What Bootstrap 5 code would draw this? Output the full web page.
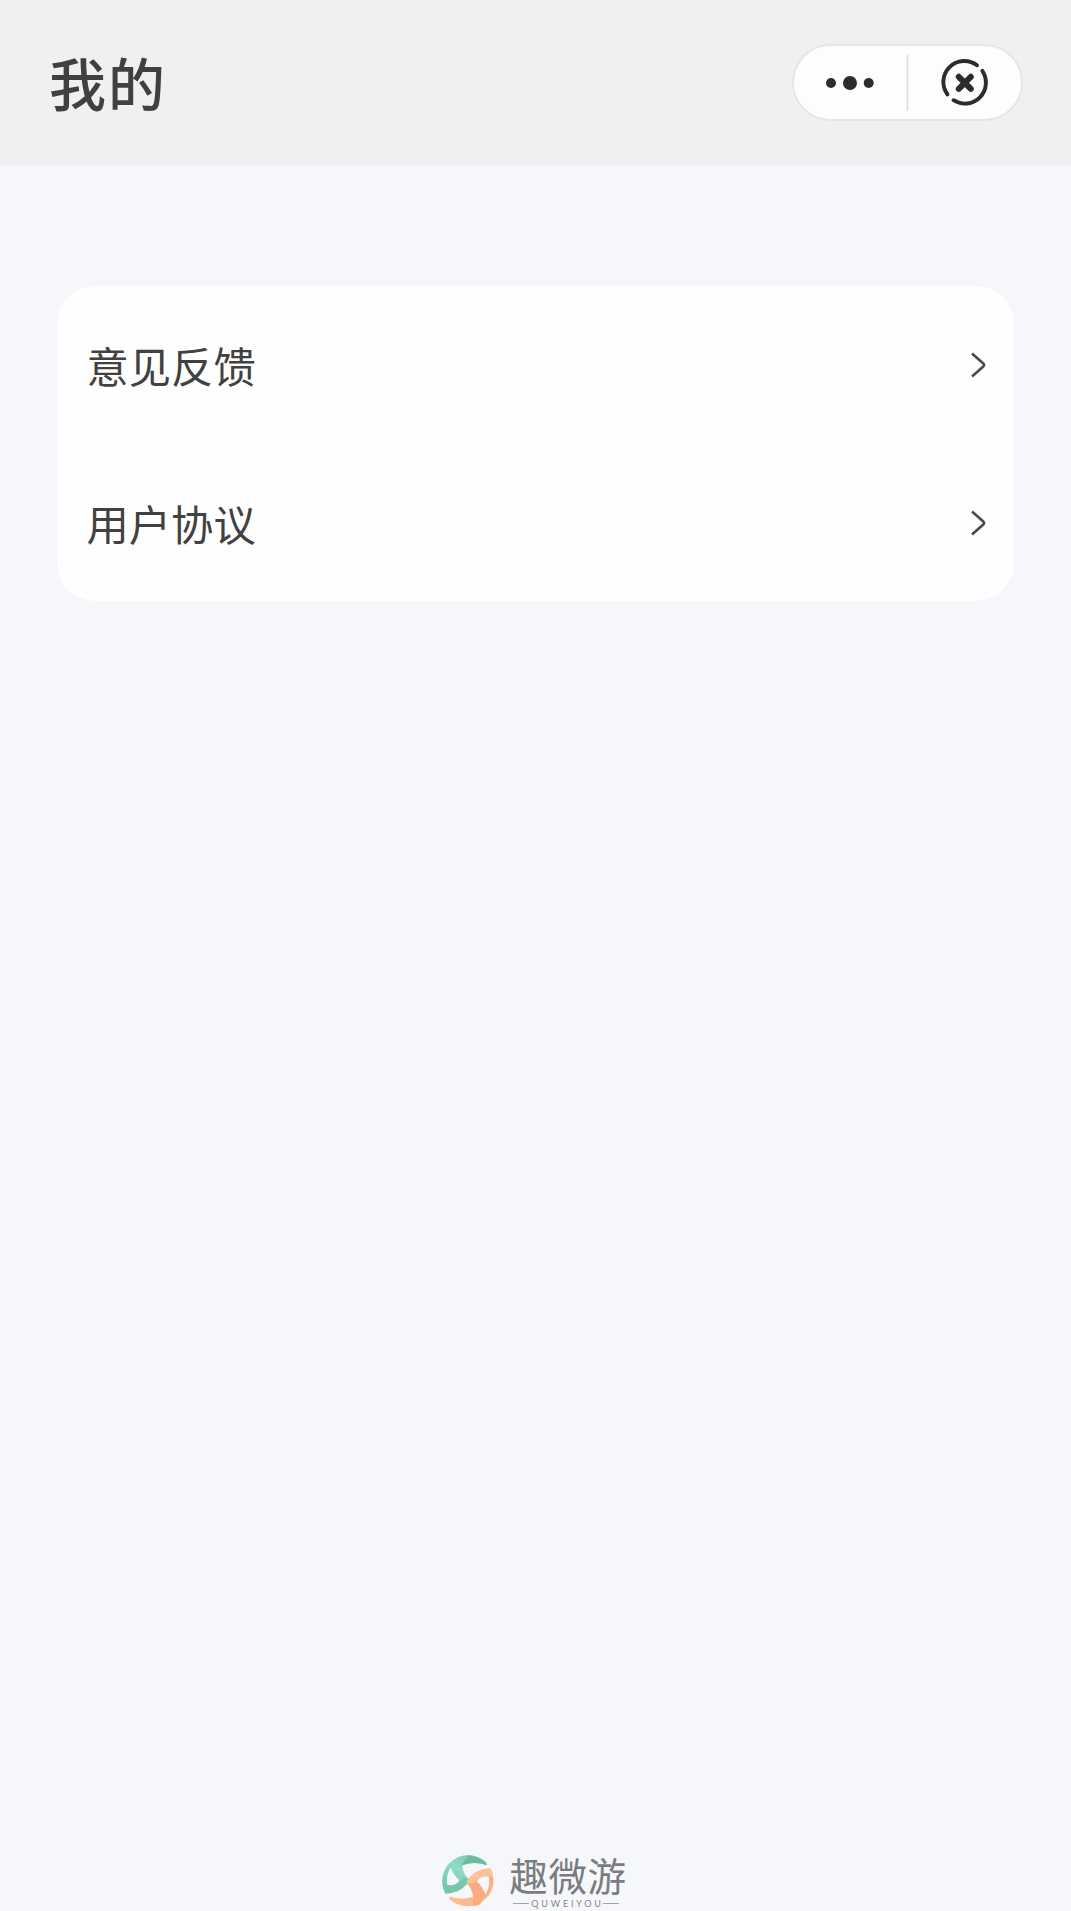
<!DOCTYPE html>
<html lang="zh-CN">
<head>
<meta charset="utf-8">
<meta name="viewport" content="width=device-width, initial-scale=1">
<title>我的</title>
<link href="https://cdn.jsdelivr.net/npm/bootstrap@5.3.0/dist/css/bootstrap.min.css" rel="stylesheet">
<style>
body{background:#f5f7fb;color:#3b3b3b;font-family:"Noto Sans CJK SC",sans-serif;height:1911px;overflow:hidden}
.topbar{height:166px;background:#f0f0f0;padding:0 48px 2px 49px}
.page-title{font-size:57px;line-height:80px;font-weight:500;color:#404040;margin:0 0 2px;letter-spacing:2px}
.capsule{width:231px;height:77px;border:2px solid #e6e6e6;border-radius:39px;background:#fdfdfd}
.capsule svg{display:block}
.menu-card{margin:120px 57px 0;height:315px;border-radius:38px;background:#fefefe;overflow:hidden}
.menu-row{padding:1px 28px 0 29.5px;font-size:42.3px;line-height:60px;color:#414141}
.row-arrow{margin-bottom:0}
.brand-mark{width:52px;height:54px}
.brand-foot{padding:0 0 3px;margin-right:2px;gap:15px}
.brand-name{font-size:38.5px;line-height:38px;height:44px;color:#7b7c7f;font-weight:400;letter-spacing:.6px}
.brand-sub{font:9px/9px Lato,"Liberation Sans",sans-serif;color:#85868a;margin-left:4px}
.brand-sub span{letter-spacing:2.8px;margin:0 -1px 0 2px}
.brand-sub i{height:1px;width:16px;background:#a3a4a8}
</style>
<script src="https://cdn.jsdelivr.net/npm/bootstrap@5.3.0/dist/js/bootstrap.bundle.min.js"></script>
</head>
<body class="d-flex flex-column">
<header class="topbar d-flex align-items-center justify-content-between">
  <h1 class="page-title">我的</h1>
  <div class="capsule d-flex flex-shrink-0">
    <svg width="227" height="73" viewBox="794 45.500 227 73" fill="#2c2c2c">
      <circle cx="831" cy="82.500" r="5"/><circle cx="850" cy="82.500" r="7"/><circle cx="868.700" cy="82.500" r="5"/>
      <path d="M907.500 54v56.500" stroke="#e0e0e0" stroke-width="1.800"/>
      <g fill="none" stroke="#2c2c2c" stroke-linecap="round">
        <path d="M977 64.700A21 21 0 0 0 947.500 94M953.500 99.700A21 21 0 0 0 982.300 70.300" stroke-width="3.900"/>
        <path d="M958.800 76.300l12 12M970.800 76.300l-12 12" stroke-width="6"/>
      </g>
    </svg>
  </div>
</header>
<main class="menu-card d-flex flex-column flex-shrink-0">
  <a href="#" class="menu-row d-flex flex-fill align-items-center justify-content-between text-decoration-none">
    <span>意见反馈</span>
    <svg class="row-arrow" width="15" height="26" viewBox="0 0 15 26" fill="none" stroke="#4b4b4b" stroke-width="2.700"><path d="M1 1.500l11 9.700q2 1.800 0 3.600L1 24.500"/></svg>
  </a>
  <a href="#" class="menu-row d-flex flex-fill align-items-center justify-content-between text-decoration-none">
    <span>用户协议</span>
    <svg class="row-arrow" width="15" height="26" viewBox="0 0 15 26" fill="none" stroke="#4b4b4b" stroke-width="2.700"><path d="M1 1.500l11 9.700q2 1.800 0 3.600L1 24.500"/></svg>
  </a>
</main>
<footer class="brand-foot d-flex justify-content-center align-items-end mt-auto">
  <svg class="brand-mark" viewBox="14 14 156 161">
    <defs>
      <linearGradient id="mint" x1="0" y1="1" x2="1" y2="0"><stop offset="0" stop-color="#69c3a7"/><stop offset=".5" stop-color="#8fdac3"/><stop offset="1" stop-color="#6fc0a7"/></linearGradient>
      <linearGradient id="peach" x1="0" y1="1" x2="1" y2="0"><stop offset="0" stop-color="#ffbf96"/><stop offset="1" stop-color="#faac7d"/></linearGradient>
    </defs>
    <path fill="url(#mint)" fill-rule="evenodd" d="M149 47Q110 34 74 48Q78 77 97 90Q76 130 24 132A78 78 0 0 1 147 39ZM40 54Q24 80 30 108Q54 112 66 93Q48 75 40 54Z"/>
    <path fill="#6bbba1" d="M74 46L93 17Q126 17 149 47Q110 34 74 48Z"/>
    <path fill="#77c7ad" d="M16 102Q53 119 79 83L97 90Q76 130 24 132Q17 119 16 102Z"/>
    <path fill="url(#peach)" fill-rule="evenodd" d="M35 141Q74 154 110 141Q106 112 87 99Q108 59 160 57A78 78 0 0 1 37 149ZM144 135Q160 109 154 81Q130 77 118 96Q136 114 144 135Z"/>
    <path fill="#f9ab82" d="M87 99L118 96Q132 106 144 135L128 165L107 170Q114 126 87 99Z"/>
    <path fill="#ffc197" d="M160 57Q108 59 87 99L110 102Q129 70 168 84Z"/>
  </svg>
  <div class="d-flex flex-column">
    <span class="brand-name">趣微游</span>
    <div class="brand-sub d-flex align-items-center"><i></i><span>QUWEIYOU</span><i></i></div>
  </div>
</footer>
</body>
</html>
